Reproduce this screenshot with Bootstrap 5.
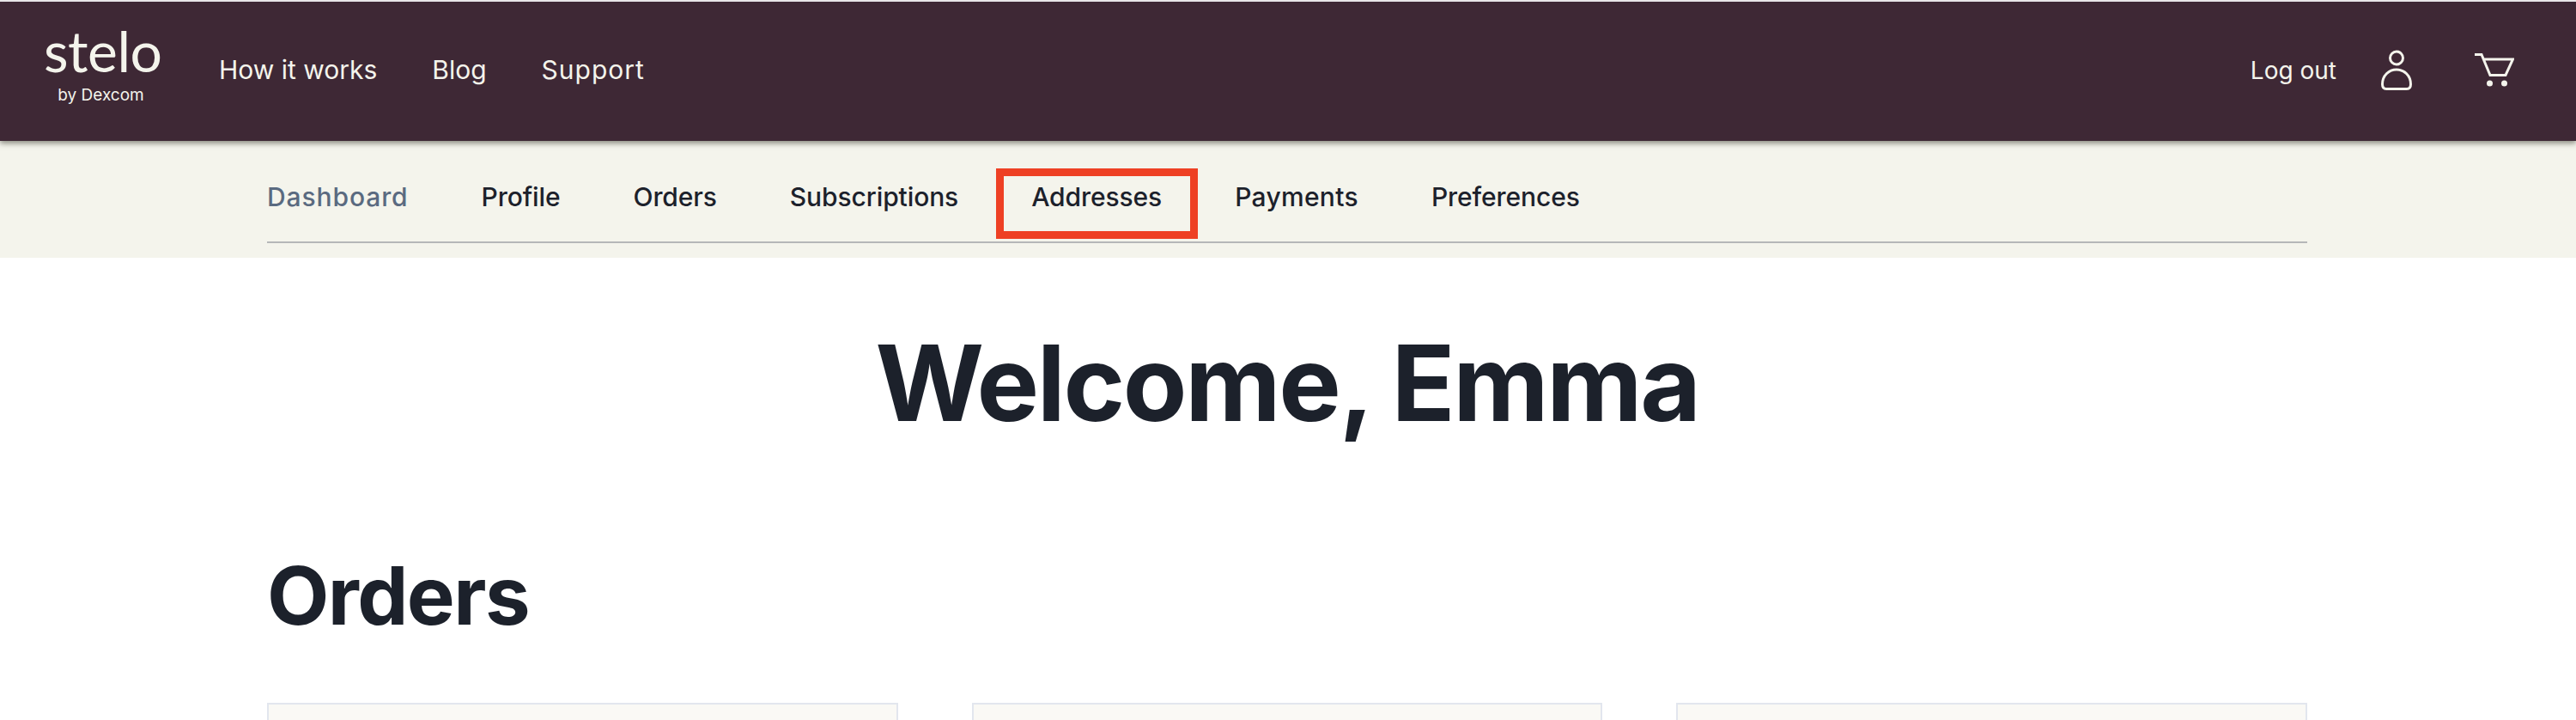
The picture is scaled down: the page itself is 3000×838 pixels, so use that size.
<!DOCTYPE html>
<html lang="en">
<head>
  <meta charset="UTF-8">
  <title>Stelo account</title>
  <meta name="viewport" content="width=device-width, initial-scale=1.0">
  <link href="https://cdn.jsdelivr.net/npm/bootstrap@5.3.3/dist/css/bootstrap.min.css" rel="stylesheet">
  <style>
    html, body { overflow: hidden; }
    body { font-family: "Inter", "Liberation Sans", sans-serif; color: #1c212b; background: #fff; }

    .top-bar {
      background: #3e2835;
      border-top: 2px solid #e8e6e8;
      height: 164px;
      padding: 0 72px 0 51px;
      box-shadow: 0 3px 6px rgba(60, 60, 50, .55);
      position: relative;
      z-index: 2;
    }
    .brand-box { color: #f4f4ec; text-decoration: none; width: 133px; line-height: 1; text-align: center; margin-top: -18px; }
    .brand-name { display: block; font-family: "Lato", sans-serif; font-size: 66px; letter-spacing: -.5px; height: 60px; line-height: 60px; }
    .brand-sub { display: block; font-size: 19px; margin-top: 12px; white-space: nowrap; }

    .top-bar .nav-link { color: #f4f4ec; font-size: 30px; padding: 0; line-height: 36px; }
    .main-links { gap: 64px; margin-left: 71px; margin-top: -4px; }
    .right-links { gap: 54px; margin-top: -2px; }
    .top-bar .support-link { letter-spacing: 1px; }
    .top-bar .logout-link { font-size: 28px; margin-right: -2px; }
    .cart-item { margin-left: 19px; }

    .sub-area { background: #f4f4ec; height: 136px; padding: 32px 313px 0 311px; }
    .sub-nav { border-bottom: 2px solid #b5b7b8; height: 87px; gap: 2px; }
    .sub-nav .nav-link { color: #1c212b; font-size: 30px; font-weight: 500; letter-spacing: -.1px; line-height: 36px; padding: 15px 41.5px 31px; position: relative; }
    .sub-nav .nav-item:first-child .nav-link { padding-left: 0; color: #5a6a80; letter-spacing: .9px; }
    .sub-nav .pay-link { letter-spacing: .3px; }
    .mark-box { position: absolute; inset: 0; border: 9px solid #ee4024; }

    .page-main { padding: 0 313px 0 311px; }
    .hello-title { font-size: 122px; font-weight: 700; letter-spacing: -2.4px; text-align: center; line-height: 1; margin: 85px 0 0; }
    .section-title { font-size: 94px; font-weight: 700; letter-spacing: -1.6px; line-height: 1; margin: 139px 0 0; }
    .order-row { --bs-gutter-x: 86px; margin-top: 78px; }
    .order-box { background: #faf9f5; border: 2px solid #e2e6ee; border-radius: 0; height: 300px; }
  </style>
</head>
<body>

  <!-- Top bar -->
  <nav class="top-bar d-flex align-items-center justify-content-between">
    <div class="d-flex align-items-center">
      <a class="brand-box" href="#">
        <span class="brand-name">stelo</span>
        <span class="brand-sub">by Dexcom</span>
      </a>
      <ul class="nav main-links">
        <li class="nav-item"><a class="nav-link" href="#">How it works</a></li>
        <li class="nav-item"><a class="nav-link" href="#">Blog</a></li>
        <li class="nav-item"><a class="nav-link support-link" href="#">Support</a></li>
      </ul>
    </div>
    <ul class="nav right-links align-items-center">
      <li class="nav-item"><a class="nav-link logout-link" href="#">Log out</a></li>
      <li class="nav-item">
        <a class="nav-link" href="#" aria-label="Account">
          <svg class="d-block" width="36" height="48" viewBox="0 0 36 48" fill="none" stroke="#f4f4ec" stroke-width="3" stroke-linejoin="round">
            <circle cx="18" cy="9.5" r="7.5"/>
            <path d="M6 45.5 H30 C33 45.5 34.5 43.5 34.5 40 C34.5 30 27 23 18 23 C9 23 1.5 30 1.5 40 C1.5 43.5 3 45.5 6 45.5 Z"/>
          </svg>
        </a>
      </li>
      <li class="nav-item cart-item">
        <a class="nav-link" href="#" aria-label="Cart">
          <svg class="d-block" width="46" height="40" viewBox="0 0 46 40" fill="#f4f4ec" stroke="none">
            <path d="M0 1.5 H8 L18 25.5 H36 L44.5 7 H10" fill="none" stroke="#f4f4ec" stroke-width="3"/>
            <circle cx="17.5" cy="35" r="3.5"/>
            <circle cx="34.5" cy="35" r="3.5"/>
          </svg>
        </a>
      </li>
    </ul>
  </nav>

  <!-- Account tabs -->
  <div class="sub-area">
    <ul class="nav sub-nav">
      <li class="nav-item"><a class="nav-link" href="#">Dashboard</a></li>
      <li class="nav-item"><a class="nav-link" href="#">Profile</a></li>
      <li class="nav-item"><a class="nav-link" href="#">Orders</a></li>
      <li class="nav-item"><a class="nav-link" href="#">Subscriptions</a></li>
      <li class="nav-item"><a class="nav-link" href="#">Addresses<span class="mark-box"></span></a></li>
      <li class="nav-item"><a class="nav-link pay-link" href="#">Payments</a></li>
      <li class="nav-item"><a class="nav-link" href="#">Preferences</a></li>
    </ul>
  </div>

  <main class="page-main">
    <h1 class="hello-title">Welcome, Emma</h1>
    <h2 class="section-title">Orders</h2>
    <div class="row order-row">
      <div class="col-4"><div class="card order-box"></div></div>
      <div class="col-4"><div class="card order-box"></div></div>
      <div class="col-4"><div class="card order-box"></div></div>
    </div>
  </main>

</body>
</html>
